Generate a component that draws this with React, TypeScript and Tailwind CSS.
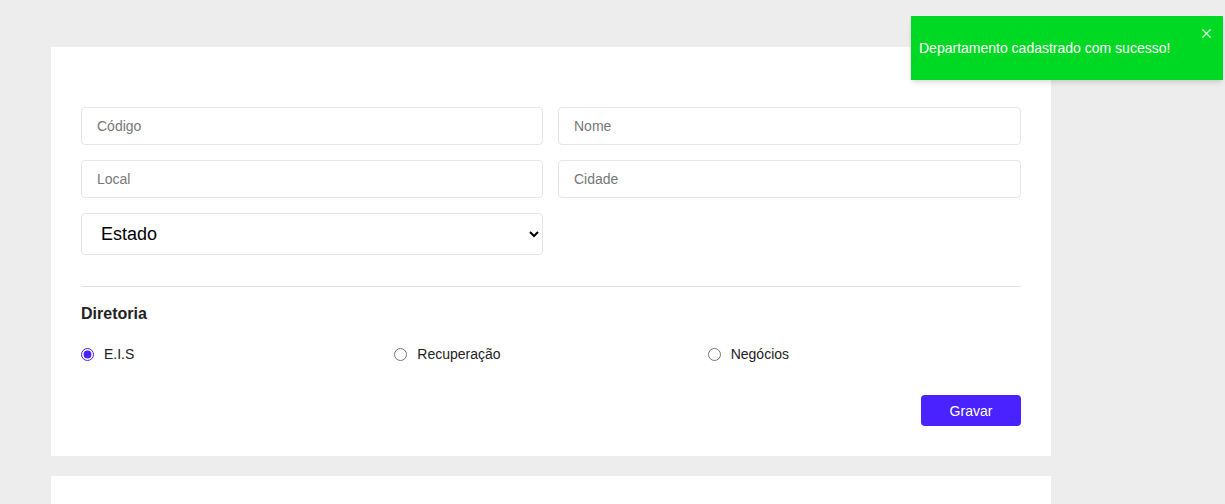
import { X } from 'lucide-react';

export default function App() {
    const diretorias = ['E.I.S', 'Recuperação', 'Negócios'];

    return (
        <div className="min-h-screen bg-[#ededed] font-['Liberation_Sans',Arial,sans-serif] text-[#212529] relative">
            <div className="pt-[47px] pl-[51px] w-[1051px]">
                {/* Form card */}
                <div className="bg-white px-[30px] pt-[60px] pb-[30px]">
                    <div className="grid grid-cols-[462px_1fr] gap-x-[15px] gap-y-[15px]">
                        <input
                            placeholder="Código"
                            className="h-[38px] px-[15px] text-sm border border-[#e6e6e6] rounded placeholder:text-[#777] outline-none"
                        />
                        <input
                            placeholder="Nome"
                            className="h-[38px] px-[15px] text-sm border border-[#e6e6e6] rounded placeholder:text-[#777] outline-none"
                        />
                        <input
                            placeholder="Local"
                            className="h-[38px] px-[15px] text-sm border border-[#e6e6e6] rounded placeholder:text-[#777] outline-none"
                        />
                        <input
                            placeholder="Cidade"
                            className="h-[38px] px-[15px] text-sm border border-[#e6e6e6] rounded placeholder:text-[#777] outline-none"
                        />
                        <select className="h-[42px] pl-[15px] pr-[6px] text-lg text-black border border-[#e6e6e6] rounded bg-white outline-none">
                            <option>Estado</option>
                        </select>
                    </div>

                    <hr className="mt-[31px] border-t border-[#e2e2e2]" />

                    <h3 className="mt-[15px] text-base font-bold text-[#222]">Diretoria</h3>

                    <div className="mt-[18px] grid grid-cols-3">
                        {diretorias.map((d, i) => (
                            <label key={d} className="flex items-center gap-[10px] text-sm text-[#222]">
                                <input
                                    type="radio"
                                    name="diretoria"
                                    defaultChecked={i === 0}
                                    className="m-0 w-[13px] h-[13px] accent-[#4a22ff]"
                                />
                                {d}
                            </label>
                        ))}
                    </div>

                    <div className="mt-[31px] flex justify-end">
                        <button className="w-[100px] h-[31px] rounded bg-[#4a22ff] text-white text-sm">Gravar</button>
                    </div>
                </div>

                {/* Next card */}
                <div className="mt-[20px] bg-white h-[40px]" />
            </div>

            {/* Toast */}
            <div className="absolute top-[16px] left-[911px] w-[312px] h-[64px] bg-[#00d923] text-white text-sm shadow-md">
                <p className="pl-[8px] pt-[22px]">Departamento cadastrado com sucesso!</p>
                <X className="absolute top-[10px] right-[9px] w-[15px] h-[15px] text-white/80" strokeWidth={2.2} />
            </div>
        </div>
    );
}
